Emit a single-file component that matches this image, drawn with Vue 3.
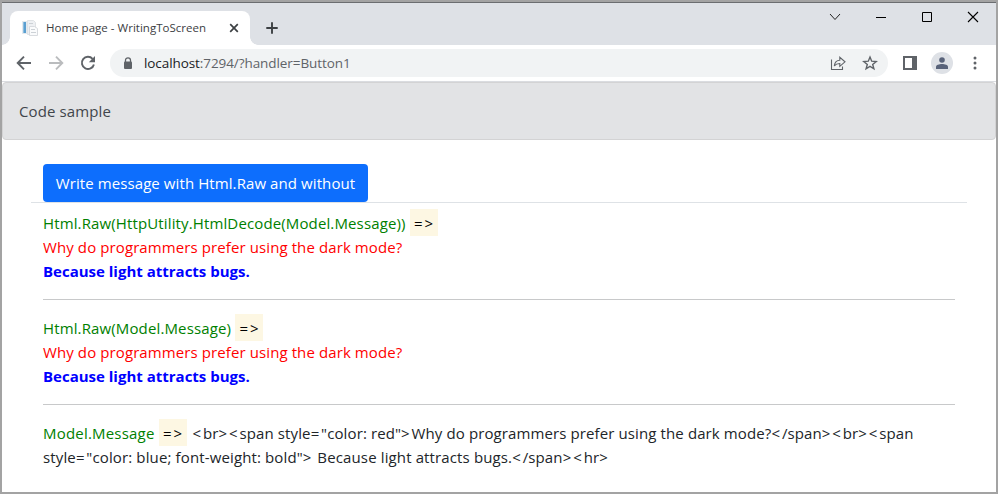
<script setup>
const samples = [
  { code: 'Html.Raw(HttpUtility.HtmlDecode(Model.Message))', cls: 'code-a' },
  { code: 'Html.Raw(Model.Message)', cls: 'code-b' }
]
const rawLines = [
  '<br><span style="color: red">Why do programmers prefer using the dark mode?</span><br><span',
  'style="color: blue; font-weight: bold"> Because light attracts bugs.</span><hr>'
].map((line) => line.split(/([<>=]+)/).filter(Boolean).map((text) => ({ text, symbol: /^[<>=]/.test(text) })))
</script>

<template>
  <div class="window">
    <div class="tabstrip">
      <div class="tab">
        <svg class="favicon" width="16" height="16" viewBox="0 0 16 16">
          <path d="M0 1h5v13H0z" fill="#e3e9ee" />
          <path d="M1 2h3v11H1z" fill="#5b9fd0" />
          <path d="M1 2h1v11H1z" fill="#8bbde0" />
          <path d="M5.500.500h6l2 2v12h-8z" fill="#eef0f3" stroke="#dfe2e5" />
          <path d="M7.500 6.500h5l3 2v7h-8z" fill="#fafbfc" stroke="#d8dbdf" />
          <path d="M7 3.500h4M9 9.500h4M9 12.500h5" stroke="#ccd1d6" />
        </svg>
        <span class="tab-title">Home page - WritingToScreen</span>
        <svg class="tab-close" width="10" height="10" viewBox="0 0 10 10"><path d="M1.200 1.200l7.600 7.600M8.800 1.200L1.200 8.800" stroke="#3c4043" stroke-width="1.700" /></svg>
      </div>
      <svg class="plus" width="12" height="12" viewBox="0 0 12 12"><path d="M6 .3v11.400M.3 6h11.400" stroke="#3c4043" stroke-width="1.900" /></svg>
      <div class="controls">
        <svg width="12" height="12" viewBox="0 0 12 12"><path d="M1 3l5 5.500L11 3" fill="none" stroke="#222" /></svg>
        <svg width="12" height="12" viewBox="0 0 12 12"><path d="M1 6.500h10" stroke="#000" /></svg>
        <svg width="12" height="12" viewBox="0 0 12 12"><path d="M1.500 1.500h9v9h-9z" fill="none" stroke="#000" /></svg>
        <svg width="12" height="12" viewBox="0 0 12 12"><path d="M1 1l10 10M11 1L1 11" stroke="#000" stroke-width="1.100" /></svg>
      </div>
    </div>

    <div class="toolbar">
      <div class="nav">
        <svg width="16" height="16" viewBox="0 0 16 16"><path d="M15 8H2.500M8 1.700L1.700 8 8 14.300" fill="none" stroke="#5f6368" stroke-width="1.900" /></svg>
        <svg width="16" height="16" viewBox="0 0 16 16"><path d="M1 8h12.500M8 1.700L14.300 8 8 14.300" fill="none" stroke="#babcbe" stroke-width="1.900" /></svg>
        <svg width="16" height="16" viewBox="0 0 16 16"><path d="M13.900 9.400A6.100 6.100 0 1 1 12.600 3.900" fill="none" stroke="#5f6368" stroke-width="1.900" /><path d="M15 1v6.200H8.800z" fill="#5f6368" /></svg>
      </div>
      <div class="omnibox">
        <svg class="lock" width="10" height="13" viewBox="0 0 10 13"><path d="M2.500 5.500V3.300a2.500 2.500 0 0 1 5 0v2.200" fill="none" stroke="#5f6368" stroke-width="1.300" /><rect x="1" y="4.500" width="8" height="7.500" rx="1" fill="#5f6368" /></svg>
        <div class="url"><span class="host">localhost</span><span class="path">:7294/?handler=Button1</span></div>
        <svg class="share" width="16" height="16" viewBox="0 0 16 16"><path d="M1.500 4.500v10h11v-3M4.300 11c.5-4 2.600-5.700 5.500-5.700V2.300L15 6.800l-5.200 4.500V8.500C7.500 8.500 5.600 9.200 4.300 11z" fill="none" stroke="#5f6368" stroke-width="1.100" /></svg>
        <svg class="star" width="16" height="16" viewBox="0 0 16 16"><path d="M8 2l1.700 4.200 4.500.3-3.500 2.900 1.200 4.400L8 11.400l-3.900 2.400 1.200-4.400L1.800 6.500l4.500-.3z" fill="none" stroke="#5f6368" stroke-width="1.400" /></svg>
      </div>
      <div class="actions">
        <svg class="panel" width="14" height="14" viewBox="0 0 14 14"><path d="M0 0h14v14H0zM2 2v10h7V2z" fill="#5f6368" fill-rule="evenodd" /></svg>
        <div class="avatar"><svg width="12" height="12" viewBox="0 0 12 12"><circle cx="6" cy="3" r="2.800" fill="#59637a" /><path d="M0 12V9.800C0 7.900 3.200 7 6 7s6 .9 6 2.800V12z" fill="#59637a" /></svg></div>
        <svg class="dots" width="4" height="14" viewBox="0 0 4 14"><circle cx="2" cy="2" r="1.500" /><circle cx="2" cy="7" r="1.500" /><circle cx="2" cy="12" r="1.500" /></svg>
      </div>
    </div>

    <div class="page">
      <div class="alert"><span class="alert-text">Code sample</span></div>
      <div class="container">
        <div class="row-head"><button class="btn" type="button"><span>Write message with Html.Raw and without</span></button></div>
        <div class="content">
          <section v-for="s in samples" :key="s.cls" class="sample">
            <div class="line"><span class="code" :class="s.cls">{{ s.code }}</span><mark>=&gt;</mark></div>
            <div class="line"><span class="question">Why do programmers prefer using the dark mode?</span></div>
            <div class="line"><span class="answer">Because light attracts bugs.</span></div>
          </section>
          <section class="raw">
            <div v-for="(line, i) in rawLines" :key="i" class="line">
              <template v-if="i === 0"><span class="code code-c">Model.Message</span><mark>=&gt;</mark></template>
              <span class="raw-text"><span v-for="(part, j) in line" :key="j" :class="{ symbol: part.symbol }">{{ part.text }}</span></span>
            </div>
          </section>
        </div>
      </div>
    </div>
  </div>
</template>

<style>
body { background: #fff; }
</style>

<style scoped>
* { box-sizing: border-box; }
svg { display: block; flex: none; }
.window {
  height: 494px; display: flex; flex-direction: column; overflow: hidden;
  border: 2px solid #a3a3a3; background: #fff; color: #212529;
  font: 15px/24px "Open Sans", "Noto Sans", sans-serif; white-space: nowrap;
}
.tabstrip {
  height: 43px; flex: none; display: flex; align-items: flex-start;
  border-top: 1px solid #6b6d70; background: #dee1e6;
}
.tab {
  position: relative; display: flex; align-items: center;
  width: 240px; height: 34px; margin: 8px 0 0 8px; padding: 0 11px 0 12px;
  border-radius: 8px 8px 0 0; background: #fff;
}
.tab::before, .tab::after {
  content: ""; position: absolute; bottom: 0; width: 8px; height: 8px;
}
.tab::before { left: -8px; background: radial-gradient(circle at 0 0, transparent 7.500px, #fff 8px); }
.tab::after { right: -8px; background: radial-gradient(circle at 100% 0, transparent 7.500px, #fff 8px); }
.tab-title { margin-left: 8px; font-size: 11.500px; letter-spacing: .02px; color: #3c4043; }
.tab-close { margin-left: auto; }
.plus { margin: 19px 0 0 16px; }
.controls { display: flex; gap: 34px; margin: 8px 17px 0 auto; }
.toolbar { height: 36px; flex: none; display: flex; align-items: center; background: #fff; }
.nav { display: flex; gap: 16px; margin-left: 14px; }
.omnibox {
  display: flex; align-items: center; width: 778px; height: 28px;
  margin-left: 14px; padding: 0 10px 0 13px; border-radius: 14px; background: #f1f3f4;
}
.url { margin-left: 11px; font-size: 13.500px; line-height: 28px; letter-spacing: -.08px; }
.host { color: #202124; }
.path { color: #5f6368; }
.share { margin-left: auto; }
.star { margin-left: 16px; }
.actions { display: flex; align-items: center; margin-left: 15px; }
.avatar {
  display: flex; align-items: center; justify-content: center;
  width: 22px; height: 22px; margin-left: 14px; border-radius: 50%; background: #dee1e6;
}
.dots { margin-left: 20px; fill: #5f6368; }
.page { flex: 1; border-top: 1px solid #dadce0; }
.alert {
  display: flex; align-items: center; height: 58px; padding: 0 16px;
  border: 1px solid #d3d3d4; border-radius: 4px; background: #e2e3e5; color: #41464b;
}
.alert-text { letter-spacing: .12px; }
.container { padding: 24px 29px 0; }
.row-head { height: 39px; padding-left: 12px; border-bottom: 1px solid #dee2e6; }
.btn {
  display: flex; align-items: center; justify-content: center;
  width: 325px; height: 38px; padding: 0; border: 0; border-radius: 4px;
  background: #0d6efd; color: #fff; font: inherit; letter-spacing: .09px;
}
.content { padding: 8px 12px 0; }
.line { display: flex; align-items: center; height: 24px; }
.sample { margin-bottom: 16px; padding-bottom: 16px; border-bottom: 1px solid #c8c9ca; }
.code { color: #008000; }
.code-a { letter-spacing: .13px; }
.code-b { letter-spacing: .13px; }
.code-c { letter-spacing: .2px; }
.question { color: #f00; letter-spacing: .1px; }
.answer { color: #00f; font-weight: 700; }
mark {
  display: flex; align-items: center; justify-content: center;
  width: 28px; height: 27px; margin: -1px 6px 0 4px; padding-left: 2px;
  background: #fdf7e3; color: #000; letter-spacing: 1.900px;
}
.raw-text { letter-spacing: .11px; }
.symbol { letter-spacing: 1.900px; }
.line:last-child .raw-text { letter-spacing: .13px; }
</style>
